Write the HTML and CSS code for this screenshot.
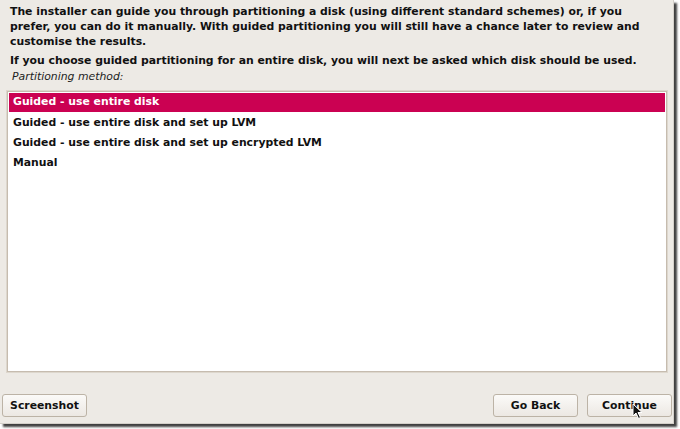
FILE: index.html
```html
<!DOCTYPE html>
<html>
<head>
<meta charset="utf-8">
<link rel="stylesheet" href="styles.css">
</head>
<body>
<div class="window">
  <div class="content">
    <p class="intro">The installer can guide you through partitioning a disk (using different standard schemes) or, if you prefer, you can do it manually. With guided partitioning you will still have a chance later to review and customise the results.</p>
    <p class="intro second">If you choose guided partitioning for an entire disk, you will next be asked which disk should be used.</p>
    <div class="label">Partitioning method:</div>
    <div class="listbox">
      <div class="row selected">Guided - use entire disk</div>
      <div class="row">Guided - use entire disk and set up LVM</div>
      <div class="row">Guided - use entire disk and set up encrypted LVM</div>
      <div class="row">Manual</div>
    </div>
  </div>
  <div class="buttons">
    <button class="btn shot">Screenshot</button>
    <div class="spacer"></div>
    <button class="btn back">Go Back</button>
    <button class="btn cont">Continue<svg class="cursor" width="11" height="17" viewBox="0 0 11 17"><path d="M1 1 L1 13 L4 10 L6.5 15.5 L8.5 14.5 L6 9.5 L10 9.5 Z" fill="#111" stroke="#fff" stroke-width="1"/></svg></button>
  </div>
</div>
</body>
</html>
```
FILE: styles.css
```css
html, body {
  margin: 0;
  padding: 0;
  background: #ffffff;
}
body {
  width: 680px;
  height: 429px;
  overflow: hidden;
  font-family: "DejaVu Sans", "Liberation Sans", sans-serif;
}
.window {
  width: 674px;
  height: 424px;
  background: #edeae5;
  border-right: 1px solid #d4d0ca;
  border-bottom: 1px solid #d4d0ca;
  box-shadow: 3px 3px 2px rgba(0,0,0,0.75);
  display: flex;
  flex-direction: column;
  box-sizing: border-box;
}
.content {
  padding: 4px 0 0 6px;
  flex: 1;
  display: flex;
  flex-direction: column;
}
.intro {
  margin: 0 0 0 4px;
  font-size: 10.85px;
  font-weight: bold;
  line-height: 15px;
  color: #111;
  width: 642px;
}
.intro.second {
  margin-top: 4px;
}
.label {
  margin: 1px 0 0 6px;
  font-size: 10.85px;
  font-style: italic;
  color: #222;
  line-height: 15px;
}
.listbox {
  margin-top: 6px;
  width: 662px;
  height: 283px;
  box-sizing: border-box;
  background: #fff;
  border: 1px solid #ddd7cd;
  box-shadow: inset 0 0 0 1px #c6bcaf;
  padding: 2px 2px;
}
.row {
  height: 20px;
  line-height: 20px;
  padding-left: 4px;
  font-size: 10.85px;
  font-weight: bold;
  color: #111;
}
.row.selected {
  background: #cb0152;
  color: #fff;
  height: 19px;
  line-height: 18px;
  margin-bottom: 1px;
}
.buttons {
  display: flex;
  align-items: center;
  padding: 0 0 6px 2px;
  height: 24px;
  margin-bottom: 0;
}
.spacer { flex: 1; }
.btn {
  position: relative;
  height: 23px;
  box-sizing: border-box;
  border: 1px solid #bcb3a6;
  border-radius: 3px;
  background: linear-gradient(#fbfaf8, #ece8e3);
  font-family: "DejaVu Sans", "Liberation Sans", sans-serif;
  font-size: 10.85px;
  font-weight: bold;
  color: #111;
  padding: 0;
}
.shot { width: 85px; }
.back { width: 85px; margin-right: 9px; }
.cont { width: 85px; margin-right: 1px; }
.cursor {
  position: absolute;
  left: 44px;
  top: 8px;
}
```
